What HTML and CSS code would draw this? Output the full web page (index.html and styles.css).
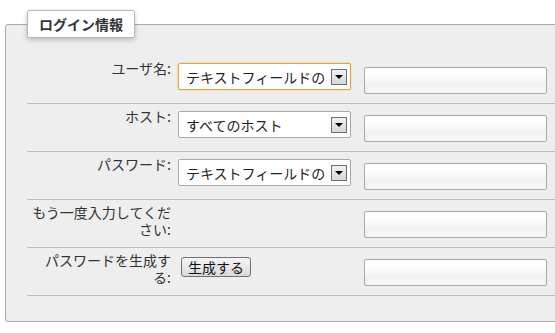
FILE: index.html
```html
<!doctype html>
<html lang="ja">
  <head>
    <meta charset="UTF-8" />
    <title>ログイン情報</title>
    <link rel="stylesheet" href="styles.css">
  </head>
  <body>
    <fieldset class="panel">
      <legend class="panel-title">ログイン情報</legend>

      <div class="row">
        <label class="label">ユーザ名:</label>
        <div class="field">
          <div class="select focused">
            <span class="select-text">テキストフィールドの</span>
            <span class="select-arrow"></span>
          </div>
        </div>
        <input class="text" type="text" />
      </div>

      <div class="row">
        <label class="label">ホスト:</label>
        <div class="field">
          <div class="select">
            <span class="select-text">すべてのホスト</span>
            <span class="select-arrow"></span>
          </div>
        </div>
        <input class="text" type="text" />
      </div>

      <div class="row">
        <label class="label">パスワード:</label>
        <div class="field">
          <div class="select">
            <span class="select-text">テキストフィールドの</span>
            <span class="select-arrow"></span>
          </div>
        </div>
        <input class="text" type="password" />
      </div>

      <div class="row">
        <label class="label">もう一度入力してください:</label>
        <div class="field"></div>
        <input class="text" type="password" />
      </div>

      <div class="row">
        <label class="label">パスワードを生成する:</label>
        <div class="field">
          <button class="generate">生成する</button>
        </div>
        <input class="text" type="text" />
      </div>
    </fieldset>
  </body>
</html>
```

FILE: styles.css
```css
html {
  overflow: hidden;
}

body {
  margin: 0;
  background-color: #fff;
  font-family: "Noto Sans CJK JP", "Noto Sans", sans-serif;
  font-size: 14px;
  color: #333;
}

.panel {
  margin: 10px -40px 0 5px;
  padding: 18px 0 25px 21px;
  border: 1px solid #aaa;
  border-radius: 3px;
  background-color: #eee;
}

.panel-title {
  box-sizing: border-box;
  height: 28px;
  padding: 0 11px;
  line-height: 26px;
  font-weight: bold;
  color: #333;
  background-color: #fff;
  border: 1px solid #b8b8b8;
  border-radius: 2px;
  box-shadow: 0 2px 5px rgba(0, 0, 0, 0.22);
}

.row {
  box-sizing: border-box;
  height: 48px;
  display: grid;
  grid-template-columns: 144px 179px 183px;
  column-gap: 7px;
  border-bottom: 1px solid #bbb;
}

.label {
  padding: 4px 0 0 3px;
  line-height: 17px;
  text-align: right;
}

.field {
  display: flex;
  align-items: flex-start;
  padding-top: 7px;
}

.select {
  box-sizing: border-box;
  width: 173px;
  height: 27px;
  display: flex;
  align-items: center;
  padding: 0 3px 0 7px;
  background-color: #fff;
  border: 1px solid #aaa;
  border-radius: 2px;
  color: #222;
}

.select.focused {
  border-color: #e2a43e;
  box-shadow: 0 0 2px #f2c57a;
}

.select-text {
  flex: 1;
  white-space: nowrap;
  overflow: hidden;
}

.select-arrow {
  box-sizing: border-box;
  width: 16px;
  height: 16px;
  display: flex;
  align-items: center;
  justify-content: center;
  border: 1px solid #6e6e6e;
  background: linear-gradient(#f2f2f2, #d6d6d6);
}

.select-arrow::after {
  content: "";
  border-left: 4px solid transparent;
  border-right: 4px solid transparent;
  border-top: 4px solid #000;
}

.text {
  box-sizing: border-box;
  margin: 11px 0 0 0;
  width: 183px;
  height: 27px;
  border: 1px solid #aaa;
  border-radius: 2px;
  background: linear-gradient(#fff, #fff 25%, #f1f1f1 70%, #f8f8f8);
}

.generate {
  margin: 2px 0 0 3px;
  height: 20px;
  padding: 0 6px;
  font-family: "Noto Sans CJK JP", sans-serif;
  font-size: 14px;
  line-height: 18px;
  color: #111;
  border: 1px solid #707070;
  border-radius: 3px;
  background: linear-gradient(#f4f4f4, #e9e9e9 50%, #d8d8d8);
}
```
